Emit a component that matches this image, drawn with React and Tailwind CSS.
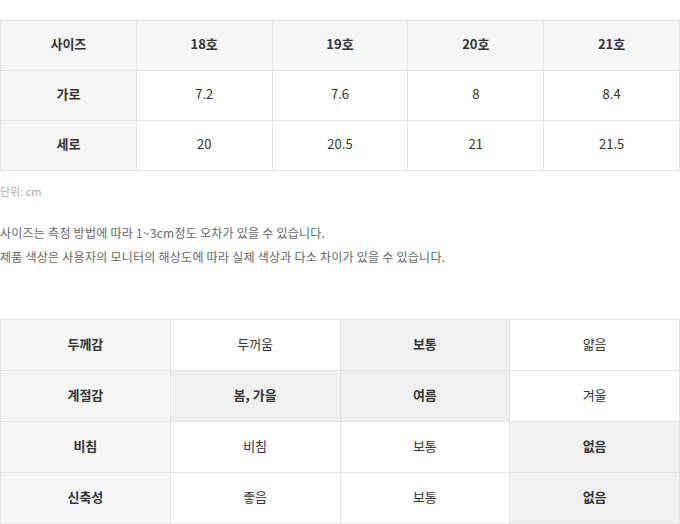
const sizeHead = ["사이즈", "18호", "19호", "20호", "21호"];
const sizeRows = [
  ["가로", "7.2", "7.6", "8", "8.4"],
  ["세로", "20", "20.5", "21", "21.5"],
];

const feelRows = [
  { label: "두께감", items: ["두꺼움", "보통", "얇음"], on: 1 },
  { label: "계절감", items: ["봄, 가을", "여름", "겨울"], on: [0, 1] },
  { label: "비침", items: ["비침", "보통", "없음"], on: 2 },
  { label: "신축성", items: ["좋음", "보통", "없음"], on: 2 },
];

const isOn = (on, i) => (Array.isArray(on) ? on.includes(i) : on === i);

export default function App() {
  return (
    <div
      className="w-[680px] bg-white pt-5 text-[#333]"
      style={{ fontFamily: '"Noto Sans CJK KR", "Noto Sans", sans-serif' }}
    >
      <table className="w-full table-fixed border-collapse text-[13px]">
        <thead>
          <tr className="h-[50px] bg-[#f6f6f6]">
            {sizeHead.map((h) => (
              <th key={h} className="border border-[#e5e5e5] pb-[3px] font-bold">
                {h}
              </th>
            ))}
          </tr>
        </thead>
        <tbody>
          {sizeRows.map((row) => (
            <tr key={row[0]} className="h-[50px]">
              {row.map((c, i) =>
                i === 0 ? (
                  <th key={i} className="border border-[#e5e5e5] bg-[#f6f6f6] pb-[3px] font-bold">
                    {c}
                  </th>
                ) : (
                  <td key={i} className="border border-[#e5e5e5] pb-[3px] text-center">
                    {c}
                  </td>
                )
              )}
            </tr>
          ))}
        </tbody>
      </table>

      <p className="mt-[12px] text-[11px] leading-[16px] text-[#aaa]">단위: cm</p>

      <div className="mt-[22px] text-[12px] leading-[24px] tracking-[0.25px] text-[#666]">
        <p>사이즈는 측정 방법에 따라 1~3cm정도 오차가 있을 수 있습니다.</p>
        <p>제품 색상은 사용자의 모니터의 해상도에 따라 실제 색상과 다소 차이가 있을 수 있습니다.</p>
      </div>

      <table className="mt-[50px] w-full table-fixed border-collapse text-[13px]">
        <tbody>
          {feelRows.map((r) => (
            <tr key={r.label} className="h-[51px]">
              <th className="border border-[#e5e5e5] bg-[#f6f6f6] pb-[3px] font-bold">{r.label}</th>
              {r.items.map((c, i) => (
                <td
                  key={i}
                  className={
                    isOn(r.on, i)
                      ? "border border-[#e5e5e5] bg-[#f0f0f0] pb-[3px] text-center font-bold"
                      : "border border-[#e5e5e5] pb-[3px] text-center"
                  }
                >
                  {c}
                </td>
              ))}
            </tr>
          ))}
        </tbody>
      </table>
    </div>
  );
}
